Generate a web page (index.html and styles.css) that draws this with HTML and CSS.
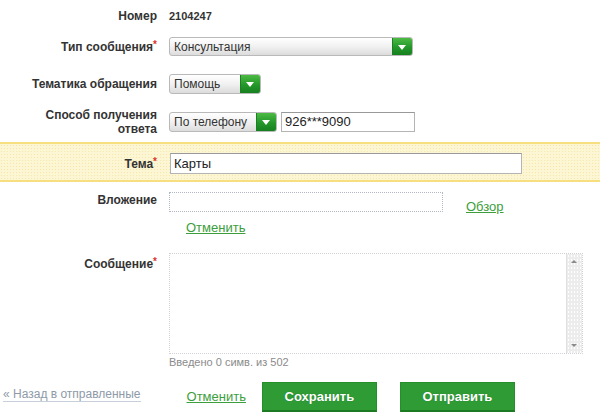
FILE: index.html
```html
<!DOCTYPE html>
<html lang="ru">
<head>
<meta charset="utf-8">
<link rel="stylesheet" href="styles.css">
</head>
<body>
<form class="form">
  <div class="row row-num">
    <div class="lbl">Номер</div>
    <div class="val">2104247</div>
  </div>
  <div class="row row-type">
    <div class="lbl">Тип сообщения<span class="req">*</span></div>
    <div class="select sel-wide"><span class="sel-text">Консультация</span><span class="sel-btn"></span></div>
  </div>
  <div class="row row-topic">
    <div class="lbl">Тематика обращения</div>
    <div class="select sel-topic"><span class="sel-text">Помощь</span><span class="sel-btn"></span></div>
  </div>
  <div class="row row-way">
    <div class="lbl">Способ получения ответа</div>
    <div class="select sel-way"><span class="sel-text">По телефону</span><span class="sel-btn"></span></div>
    <div class="input input-phone">926***9090</div>
  </div>
  <div class="band">
    <div class="row">
      <div class="lbl">Тема<span class="req">*</span></div>
      <div class="input input-theme">Карты</div>
    </div>
  </div>
  <div class="row row-att">
    <div class="lbl">Вложение</div>
    <div class="att">
      <div class="att-line">
        <div class="input input-file"></div>
        <a class="link browse">Обзор</a>
      </div>
      <a class="link cancel-att">Отменить</a>
    </div>
  </div>
  <div class="row row-msg">
    <div class="lbl">Сообщение<span class="req">*</span></div>
    <div class="msg">
      <div class="textarea">
        <div class="scroll"><span class="arr up"></span><span class="arr down"></span></div>
      </div>
      <div class="counter">Введено 0 симв. из 502</div>
    </div>
  </div>
  <div class="actions">
    <a class="back">« Назад в отправленные</a>
    <a class="link cancel">Отменить</a>
    <span class="btn btn-save">Сохранить</span>
    <span class="btn btn-send">Отправить</span>
  </div>
</form>
</body>
</html>
```

FILE: styles.css
```css
html, body {
  margin: 0;
  padding: 0;
  background: #fff;
}
body {
  font-family: "Liberation Sans", Arial, sans-serif;
  font-size: 12px;
  color: #333;
  width: 600px;
  height: 420px;
  overflow: hidden;
}
.form {
  display: flex;
  flex-direction: column;
}
.row {
  display: flex;
  align-items: center;
}
.lbl {
  width: 128px;
  margin-left: 29px;
  margin-right: 12px;
  text-align: right;
  font-weight: bold;
  color: #333;
  line-height: 14px;
  flex-shrink: 0;
}
.req {
  color: #d9342b;
  font-size: 10px;
  vertical-align: top;
  position: relative;
  top: -2px;
}
.val {
  color: #333;
  font-weight: bold;
  font-size: 11px;
}
.row-num { margin-top: 9px; }
.row-type { margin-top: 14px; }
.row-topic { margin-top: 18px; }
.row-way { margin-top: 14px; }

.select {
  display: flex;
  height: 19px;
  border: 1px solid #b9b9b9;
  border-radius: 3px;
  background: linear-gradient(#ffffff, #f1f1f1 50%, #dcdcdc);
  box-sizing: border-box;
  overflow: hidden;
}
.sel-text {
  flex: 1;
  padding-left: 4px;
  line-height: 18px;
  color: #333;
  font-size: 12px;
}
.sel-btn {
  width: 19px;
  background: linear-gradient(#4cbb44, #23972a 55%, #16801f);
  position: relative;
  border-left: 1px solid #1d7f24;
}
.sel-btn::after {
  content: "";
  position: absolute;
  left: 5px;
  top: 7px;
  border-left: 4px solid transparent;
  border-right: 4px solid transparent;
  border-top: 5px solid #fff;
}
.sel-wide { width: 244px; }
.sel-topic { width: 92px; height: 20px; }
.sel-topic .sel-text { line-height: 19px; }
.sel-way { width: 108px; height: 20px; }
.sel-way .sel-text { line-height: 19px; }

.input {
  box-sizing: border-box;
  border: 1px solid #b4b4b4;
  border-top-color: #999;
  background: #fff;
  height: 20px;
  padding-left: 3px;
  line-height: 18px;
  font-size: 13px;
  color: #222;
}
.input-phone {
  width: 134px;
  margin-left: 4px;
}

.band {
  margin-top: 6px;
  background-color: #fdf6d5;
  background-image: radial-gradient(#f6e6a8 0.5px, transparent 0.8px);
  background-size: 3px 3px;
  border-top: 2px solid #f7de7e;
  border-bottom: 2px solid #f7de7e;
  padding: 9px 0 6px;
}
.input-theme {
  width: 352px;
  height: 21px;
  margin-left: 1px;
  line-height: 19px;
}

.row-att {
  margin-top: 10px;
  align-items: flex-start;
}
.row-att .lbl { margin-top: 1px; }
.att {
  display: flex;
  flex-direction: column;
}
.att-line {
  display: flex;
  align-items: flex-end;
}
.input-file {
  width: 274px;
  height: 20px;
  border: 1px dotted #b0b8c4;
}
.link {
  color: #3c9e3c;
  text-decoration: underline;
  font-size: 13px;
}
.browse {
  margin-left: 23px;
  position: relative;
  top: 2px;
}
.cancel-att {
  margin-left: 17px;
  margin-top: 8px;
}

.row-msg {
  margin-top: 18px;
  align-items: flex-start;
}
.row-msg .lbl { margin-top: 4px; }
.msg {
  display: flex;
  flex-direction: column;
}
.textarea {
  width: 414px;
  height: 101px;
  box-sizing: border-box;
  border: 1px dotted #cfd3d8;
  background: #fff;
  display: flex;
  justify-content: flex-end;
}
.scroll {
  width: 15px;
  background-color: #ececec;
  background-image: radial-gradient(#fff 0.6px, transparent 0.9px);
  background-size: 3px 4px;
  border-left: 1px solid #e0e0e0;
  position: relative;
}
.arr {
  position: absolute;
  left: 4px;
  border-left: 3px solid transparent;
  border-right: 3px solid transparent;
}
.arr.up {
  top: 6px;
  border-bottom: 3px solid #8a8a8a;
}
.arr.down {
  bottom: 6px;
  border-top: 3px solid #8a8a8a;
}
.counter {
  margin-top: 2px;
  color: #8b8b8b;
  font-size: 11px;
}

.actions {
  margin-top: 14px;
  display: flex;
  align-items: center;
}
.back {
  margin-left: 3px;
  color: #8e9aa8;
  font-size: 12px;
  border-bottom: 1px solid #c7d0da;
  line-height: 13px;
  position: relative;
  top: -2px;
}
.cancel {
  margin-left: 46px;
  font-size: 13px;
  position: relative;
  top: -1px;
}
.btn {
  box-sizing: border-box;
  width: 115px;
  height: 30px;
  line-height: 28px;
  text-align: center;
  color: #fff;
  font-weight: bold;
  font-size: 13px;
  background: #2e9b35;
  border: 1px solid #259029;
  border-bottom: 2px solid #1c7a22;
  text-shadow: 0 0 1px rgba(0,0,0,0.25);
}
.btn-save { margin-left: 16px; }
.btn-send { margin-left: 23px; }
```
